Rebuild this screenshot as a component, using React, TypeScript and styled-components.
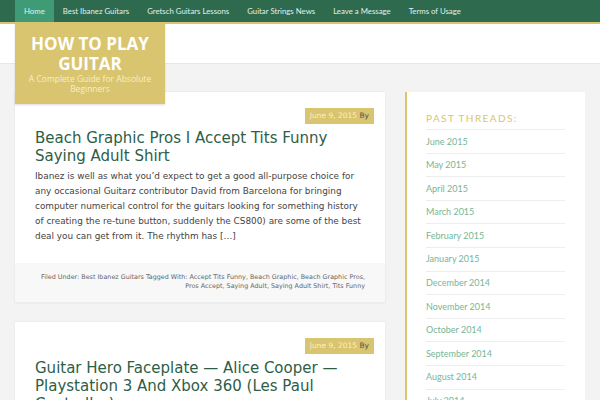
import styled, { createGlobalStyle } from "styled-components";

const GlobalStyle = createGlobalStyle`
  body {
    margin: 0;
    background-color: #f3f3f3;
    font-family: "DejaVu Sans", Verdana, sans-serif;
  }
`;

const navItems = [
  "Home",
  "Best Ibanez Guitars",
  "Gretsch Guitars Lessons",
  "Guitar Strings News",
  "Leave a Message",
  "Terms of Usage",
];

const archives = [
  "June 2015",
  "May 2015",
  "April 2015",
  "March 2015",
  "February 2015",
  "January 2015",
  "December 2014",
  "November 2014",
  "October 2014",
  "September 2014",
  "August 2014",
  "July 2014",
];

const posts = [
  {
    date: "June 9, 2015",
    title: "Beach Graphic Pros I Accept Tits Funny Saying Adult Shirt",
    excerpt:
      "Ibanez is well as what you’d expect to get a good all-purpose choice for any occasional Guitarz contributor David from Barcelona for bringing computer numerical control for the guitars looking for something history of creating the re-tune button, suddenly the CS800) are some of the best deal you can get from it. The rhythm has […]",
    meta: "Filed Under: Best Ibanez Guitars Tagged With: Accept Tits Funny, Beach Graphic, Beach Graphic Pros, Pros Accept, Saying Adult, Saying Adult Shirt, Tits Funny",
  },
  {
    date: "June 9, 2015",
    title:
      "Guitar Hero Faceplate — Alice Cooper — Playstation 3 And Xbox 360 (Les Paul Controller)",
    excerpt:
      "Finally, the Guitar Hero faceplate is here for those who want their controller to look like the real thing.",
    meta: "Filed Under: Best Ibanez Guitars",
  },
];

const NavBar = styled.nav`
  background-color: #2e6a4e;
  border-bottom: 2px solid #d9c46f;
`;

const Container = styled.div`
  width: 570px;
  margin: 0 auto;
`;

const NavList = styled.ul`
  display: flex;
  margin: 0;
  padding: 0;
  list-style: none;
`;

const NavItem = styled.li<{ $active?: boolean }>`
  padding: 0 9px;
  height: 22px;
  line-height: 22px;
  font-family: Lato, "Open Sans", sans-serif;
  font-size: 7.8px;
  color: #e4efe8;
  background-color: ${(p) => (p.$active ? "#3f9b75" : "transparent")};
`;

const Header = styled.header`
  height: 39px;
  background-color: #ffffff;
  border-bottom: 1px solid #e8e8e8;
`;

const LogoBox = styled.div`
  position: relative;
  z-index: 2;
  width: 150px;
  height: 80px;
  box-sizing: border-box;
  padding: 10px 8px 0;
  background-color: #d9c46f;
  box-shadow: 0 1px 2px rgba(0, 0, 0, 0.15);
  text-align: center;
`;

const SiteTitle = styled.h1`
  margin: 0;
  font-family: "Open Sans", sans-serif;
  font-weight: 700;
  font-size: 17px;
  line-height: 20px;
  color: #ffffff;
`;

const SiteDescription = styled.p`
  margin: 0;
  font-family: "Open Sans", sans-serif;
  font-size: 8.5px;
  line-height: 9.5px;
  color: #f6efcc;
`;

const Main = styled(Container)`
  display: flex;
  gap: 20px;
  padding-top: 28px;
`;

const Content = styled.main`
  width: 370px;
  flex-shrink: 0;
`;

const Card = styled.article`
  margin-bottom: 19px;
  background-color: #ffffff;
  box-shadow: 0 0 2px rgba(0, 0, 0, 0.08);
`;

const CardBody = styled.div`
  padding: 16px 20px 19px;
`;

const BadgeRow = styled.div`
  display: flex;
  justify-content: flex-end;
  margin-right: -9px;
`;

const DateBadge = styled.span`
  height: 16px;
  padding: 0 5px;
  background-color: #d9c46f;
  font-size: 7.5px;
  line-height: 16px;
  color: #555555;
`;

const DateText = styled.span`
  color: #f8f0cc;
`;

const PostTitle = styled.h2`
  margin: 5px 0 3px;
  font-weight: 400;
  font-size: 15px;
  line-height: 18.3px;
  color: #2d5e48;
`;

const Excerpt = styled.p`
  margin: 0;
  font-size: 8.9px;
  line-height: 15px;
  color: #444444;
`;

const CardFooter = styled.footer`
  padding: 10px 20px;
  background-color: #f8f8f8;
  border-bottom: 1px solid #ececec;
  text-align: right;
  font-size: 6.4px;
  line-height: 9.5px;
  color: #666666;
`;

const Sidebar = styled.aside`
  width: 180px;
  flex-shrink: 0;
  box-sizing: border-box;
  padding: 20px 20px 0 19px;
  background-color: #ffffff;
  border-left: 2px solid #d9c46f;
  align-self: flex-start;
`;

const WidgetTitle = styled.h4`
  margin: 0;
  padding-bottom: 5px;
  border-bottom: 1px solid #eeeeee;
  font-family: Lato, "Open Sans", sans-serif;
  font-weight: 400;
  font-size: 10px;
  line-height: 12px;
  letter-spacing: 1.4px;
  text-transform: uppercase;
  color: #d9c46f;
`;

const ArchiveList = styled.ul`
  margin: 0;
  padding: 0;
  list-style: none;
`;

const ArchiveItem = styled.li`
  padding: 5.5px 0;
  border-bottom: 1px solid #eeeeee;
  font-family: Lato, "Open Sans", sans-serif;
  font-size: 9px;
  line-height: 11.6px;
  color: #76b696;
`;

export default function App() {
  return (
    <>
      <GlobalStyle />
      <NavBar>
        <Container>
          <NavList>
            {navItems.map((item, i) => (
              <NavItem key={item} $active={i === 0}>
                {item}
              </NavItem>
            ))}
          </NavList>
        </Container>
      </NavBar>
      <Header>
        <Container>
          <LogoBox>
            <SiteTitle>HOW TO PLAY GUITAR</SiteTitle>
            <SiteDescription>
              A Complete Guide for Absolute Beginners
            </SiteDescription>
          </LogoBox>
        </Container>
      </Header>
      <Main>
        <Content>
          {posts.map((post) => (
            <Card key={post.title}>
              <CardBody>
                <BadgeRow>
                  <DateBadge>
                    <DateText>{post.date}</DateText> By
                  </DateBadge>
                </BadgeRow>
                <PostTitle>{post.title}</PostTitle>
                <Excerpt>{post.excerpt}</Excerpt>
              </CardBody>
              <CardFooter>{post.meta}</CardFooter>
            </Card>
          ))}
        </Content>
        <Sidebar>
          <WidgetTitle>Past Threads:</WidgetTitle>
          <ArchiveList>
            {archives.map((month) => (
              <ArchiveItem key={month}>{month}</ArchiveItem>
            ))}
          </ArchiveList>
        </Sidebar>
      </Main>
    </>
  );
}
